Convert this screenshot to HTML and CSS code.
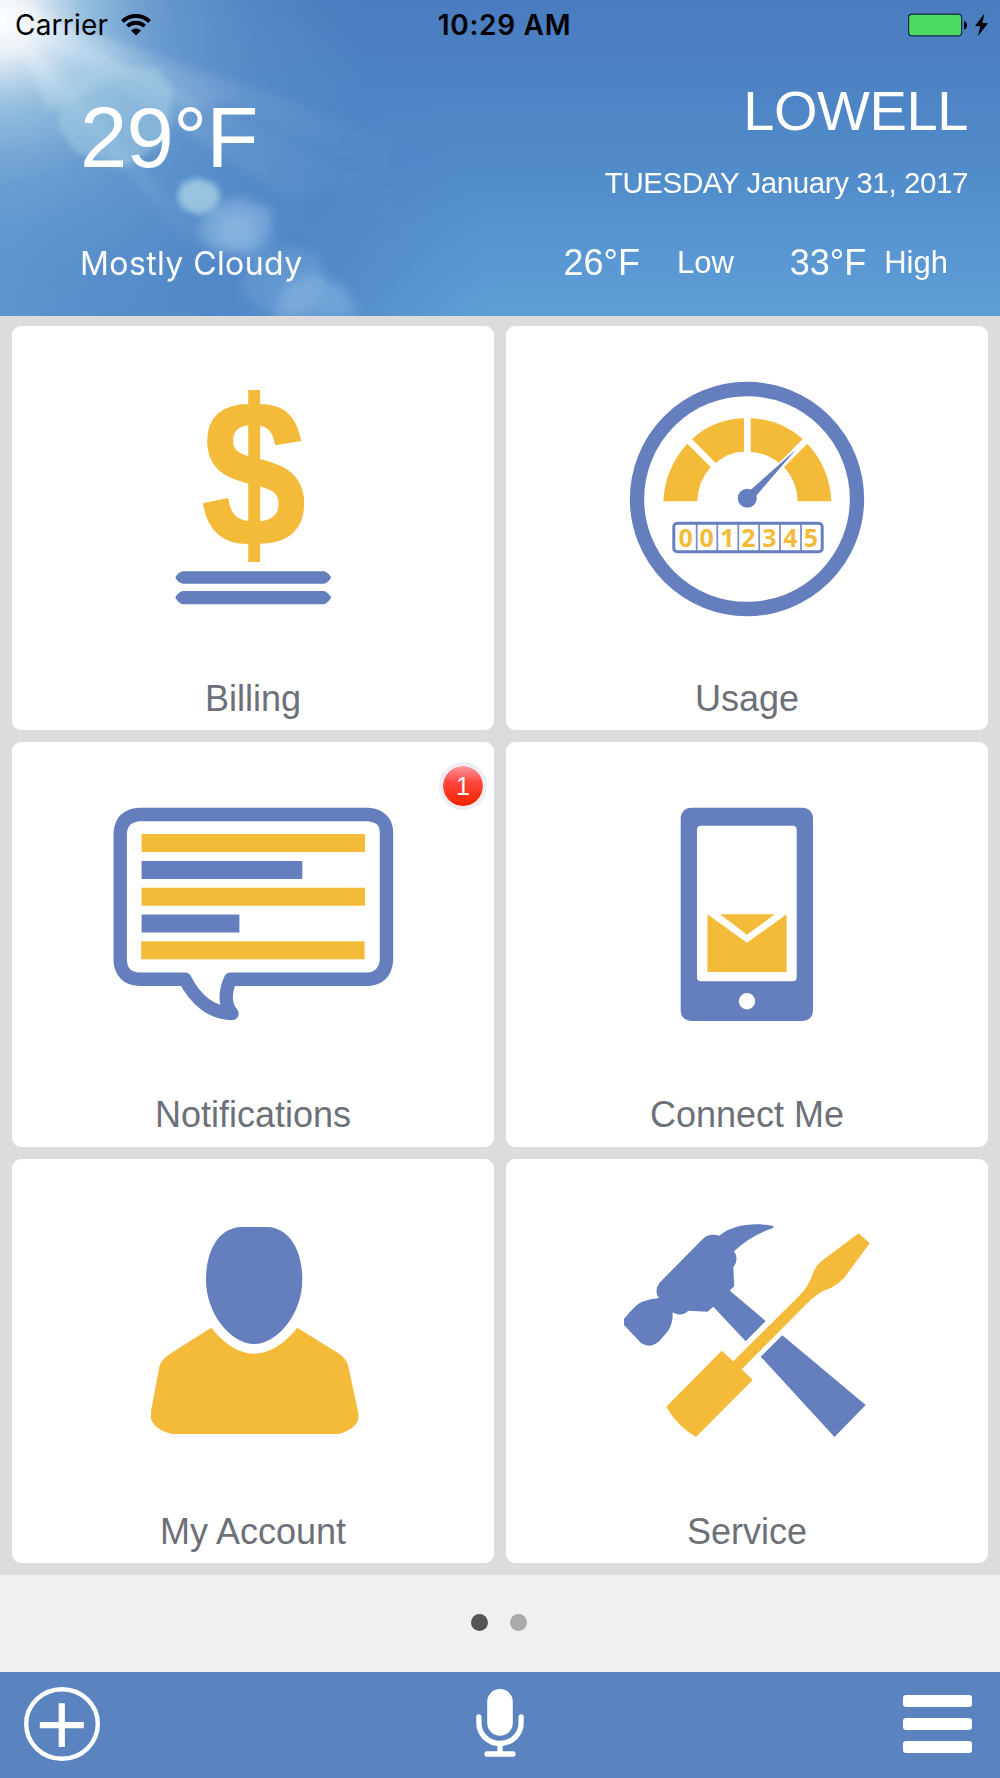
FILE: index.html
```
<!DOCTYPE html>
<html lang="en">
<head>
    <meta charset="UTF-8">
    <title>Home</title>
    <link rel="stylesheet" href="styles.css">
</head>
<body>

    <header>
        <svg class="sky" viewBox="0 0 1000 316" preserveAspectRatio="none">
            <defs>
                <linearGradient id="base" x1="0" y1="0" x2="0" y2="1">
                    <stop offset="0" stop-color="#4a7bbf"/>
                    <stop offset="0.5" stop-color="#508ac9"/>
                    <stop offset="1" stop-color="#5e9fd7"/>
                </linearGradient>
                <radialGradient id="sun" gradientUnits="userSpaceOnUse" cx="0" cy="20" r="370">
                    <stop offset="0" stop-color="#ffffff"/>
                    <stop offset="0.09" stop-color="#f2f6f9" stop-opacity="0.95"/>
                    <stop offset="0.23" stop-color="#a9cfe6" stop-opacity="0.8"/>
                    <stop offset="0.45" stop-color="#7fb1da" stop-opacity="0.5"/>
                    <stop offset="0.7" stop-color="#74a6d5" stop-opacity="0.22"/>
                    <stop offset="1" stop-color="#6a9fd2" stop-opacity="0"/>
                </radialGradient>
                <radialGradient id="shade" gradientUnits="userSpaceOnUse" cx="200" cy="260" r="290">
                    <stop offset="0" stop-color="#4d82c4" stop-opacity="0.85"/>
                    <stop offset="0.5" stop-color="#4d82c4" stop-opacity="0.6"/>
                    <stop offset="1" stop-color="#4d82c4" stop-opacity="0"/>
                </radialGradient>
                <linearGradient id="ray" gradientUnits="userSpaceOnUse" x1="0" y1="0" x2="400" y2="220">
                    <stop offset="0" stop-color="#fff" stop-opacity="0.5"/>
                    <stop offset="0.35" stop-color="#cfe5f2" stop-opacity="0.22"/>
                    <stop offset="0.65" stop-color="#b5d5ec" stop-opacity="0.1"/>
                    <stop offset="1" stop-color="#a5cbe8" stop-opacity="0"/>
                </linearGradient>
                <filter id="soft" x="-20%" y="-20%" width="140%" height="140%"><feGaussianBlur stdDeviation="5"/></filter>
                <filter id="edge" x="-20%" y="-20%" width="140%" height="140%"><feGaussianBlur stdDeviation="3"/></filter>
                <filter id="haze" x="-20%" y="-20%" width="140%" height="140%"><feGaussianBlur stdDeviation="6"/></filter>
            </defs>
            <rect width="1000" height="316" fill="url(#base)"/>
            <rect width="1000" height="316" fill="url(#shade)"/>
            <rect width="1000" height="316" fill="url(#sun)"/>
            <!-- sun rays -->
            <g fill="url(#ray)" filter="url(#soft)">
                <path d="M-10 0 L450 215 L420 240 Z"/>
                <path d="M-10 -5 L230 100 L180 110 Z"/>
                <path d="M0 0 L400 140 L380 175 Z"/>
                <path d="M0 10 L330 190 L290 200 Z"/>
                <path d="M0 20 L220 250 L185 240 Z" opacity="0.6"/>
                <path d="M0 10 L130 70 L50 110 Z"/>
            </g>
            <!-- lens flare -->
            <g fill="#a9d2e6" filter="url(#edge)">
                <path d="M62 85 L95 66 L158 68 L173 90 L168 138 L125 168 L75 152 L58 125 Z" opacity="0.5"/>
                <path d="M182 183 L198 178 L215 184 L221 196 L214 208 L198 215 L183 209 L177 197 Z" opacity="0.8"/>
            </g>
            <g fill="#a3cdea" filter="url(#haze)">
                <path d="M208 205 L240 198 L272 210 L270 240 L250 256 L210 250 L199 230 Z" opacity="0.45"/>
                <circle cx="236" cy="231" r="18" opacity="0.3"/>
                <path d="M252 255 L290 246 L320 256 L325 290 L300 316 L262 310 L240 290 Z" opacity="0.2"/>
                <path d="M285 285 L315 273 L345 288 L358 316 L272 320 Z" opacity="0.35"/>
            </g>
        </svg>

        <div class="status-bar">
            <div class="carrier">
                Carrier
                <svg class="wifi" width="30" height="22" viewBox="0 0 30 22">
                    <path d="M1.5 7.5 A19.5 19.5 0 0 1 28.5 7.5" fill="none" stroke="#000" stroke-width="4"/>
                    <path d="M6.3 12.2 A12.7 12.7 0 0 1 23.7 12.2" fill="none" stroke="#000" stroke-width="3.8"/>
                    <path d="M10 16.5 A7.4 7.4 0 0 1 20 16.5 L15 21.5 Z"/>
                </svg>
            </div>
            <div class="time">10:29 AM</div>
            <svg class="battery" width="80" height="24" viewBox="0 0 80 24">
                <rect x="0.6" y="1.1" width="53" height="21.8" rx="3.5" fill="#4cd964" stroke="#10264a" stroke-width="1.2"/>
                <path d="M56 8 Q59 9 59 12.2 Q59 15.5 56 16.5 Z"/>
                <path d="M76.5 0.5 L67 13 L72.3 13.2 L70 23 L80 10.2 L74.3 10 Z"/>
            </svg>
        </div>

        <div class="weather">
            <div class="now">
                <div class="temp">29°F</div>
                <div class="condition">Mostly Cloudy</div>
            </div>
            <div class="place">
                <div class="city">LOWELL</div>
                <div class="date">TUESDAY January 31, 2017</div>
                <div class="range">
                    <span class="deg">26°F</span>
                    <span class="low">Low</span>
                    <span class="deg">33°F</span>
                    <span class="high">High</span>
                </div>
            </div>
        </div>
    </header>

    <main>
        <a class="card">
            <svg class="icon" viewBox="103 356 300 280">
                <text class="dollar" transform="translate(253.8 546) scale(0.93 1.03)">$</text>
                <path class="blue" d="M175.3 577.5 Q178 572 183 571.3 H324 Q328 572 331.2 577.5 Q328 583 324 583.7 H183 Q178 583 175.3 577.5 Z M175.3 597.5 Q178 592 183 591 H324 Q328 592 331.2 597.5 Q328 603 324 604.3 H183 Q178 603 175.3 597.5 Z"/>
            </svg>
            <span>Billing</span>
        </a>

        <a class="card">
            <svg class="icon" viewBox="597 356 300 280">
                <circle class="blue-line" cx="747" cy="499" r="110" stroke-width="14.3"/>
                <path class="yellow" d="M663.3 501.3 Q665 468 687.3 443.7 L710.7 467 Q698 481 697.3 501.3 Z"/>
                <path class="yellow" d="M692 439 Q714 419 744 418.3 V451.7 Q728 452 715.7 463 Z"/>
                <path class="yellow" d="M750.7 418.3 Q780 419 802.7 439 L779 463 Q767 453 750.7 451.7 Z"/>
                <path class="yellow" d="M807.3 443.7 Q830 468 831.3 501.3 H797.7 Q797 481 784 467 Z"/>
                <path class="blue" d="M749.5 490 L803 442.5 L756 497 Z" stroke="#fff" stroke-width="1.2"/>
                <circle class="blue" cx="747.3" cy="498.3" r="9.5"/>
                <rect class="blue-line" x="673.8" y="523.2" width="148.4" height="28.6" rx="3.5" stroke-width="3"/>
                <path class="blue-line" d="M696.7 523 V552 M717.3 523 V552 M738.3 523 V552 M759.2 523 V552 M780 523 V552 M801 523 V552" stroke-width="1.8" opacity="0.85"/>
                <g class="digits">
                    <text x="685.7" y="546.5">0</text>
                    <text x="706.7" y="546.5">0</text>
                    <text x="727.3" y="546.5">1</text>
                    <text x="748.4" y="546.5">2</text>
                    <text x="769.3" y="546.5">3</text>
                    <text x="790.3" y="546.5">4</text>
                    <text x="811" y="546.5">5</text>
                </g>
            </svg>
            <span>Usage</span>
        </a>

        <a class="card">
            <svg class="icon" viewBox="103 772 300 280">
                <path class="blue-line" stroke-width="13.4" stroke-linejoin="round" d="M139 814.5 H368 Q386.5 816 386.5 833 V961 Q384.5 978 368 979.3 H230.5 C225 991 224 1005 232 1013.5 C211 1013 195 999 185 979.3 H139 Q121.5 978 120.2 961 V833 Q121.5 816 139 814.5 Z"/>
                <rect class="yellow" x="141.6" y="834" width="223.4" height="18"/>
                <rect class="blue" x="141.6" y="861" width="160.7" height="18"/>
                <rect class="yellow" x="141.6" y="887.7" width="223.4" height="18"/>
                <rect class="blue" x="141.6" y="914.5" width="97.8" height="18"/>
                <rect class="yellow" x="141.2" y="941.3" width="223.4" height="18"/>
            </svg>
            <span>Notifications</span>
            <b class="badge">1</b>
        </a>

        <a class="card">
            <svg class="icon" viewBox="597 772 300 280">
                <rect class="blue" x="680.7" y="807.7" width="132.3" height="213.3" rx="10"/>
                <rect x="697" y="825.7" width="99.7" height="155.6" rx="4" fill="#fff"/>
                <path class="yellow" d="M707.4 914.3 L747 942.7 L786.6 914.3 V972 H707.4 Z"/>
                <path class="yellow" d="M720 914.3 H774.8 L747 934.7 Z"/>
                <circle cx="747" cy="1001.3" r="8.2" fill="#fff"/>
            </svg>
            <span>Connect Me</span>
        </a>

        <a class="card">
            <svg class="icon" viewBox="103 1189 300 280">
                <path class="blue" d="M241 1227 H267.5 C288 1228 302.3 1248 302.3 1280 C302.3 1314 277 1344 254.2 1344 C231 1344 206 1314 206 1280 C206 1248 220 1228 241 1227 Z"/>
                <path class="yellow" d="M211.3 1327.7 Q231 1353 254 1353.7 Q277 1353 297.3 1327.7 L338 1353 Q347 1359 348.5 1367 L358.3 1413 V1419 Q355 1430 338 1434 H172 Q155 1430 151 1419 V1411 L159.5 1366 Q161 1360 170 1353.7 Z"/>
            </svg>
            <span>My Account</span>
        </a>

        <a class="card">
            <svg class="icon" viewBox="597 1189 300 280">
                <path class="blue" d="M773.3 1226 C754 1222 732 1225 719.3 1235.7 C714 1234 708 1234 703.5 1238.3 L659.5 1282.7 Q653.5 1291 659 1298 C650 1299 642 1301 637 1305 Q629 1312 624 1319 V1325 L641 1343 Q650 1349 659 1341.5 L668 1331 Q673 1324 672.7 1312.3 Q681 1317.5 688.3 1310.7 L707.5 1311.7 L713.3 1306.7 L745.7 1341.3 L765.7 1321 L729.8 1290.7 L734.2 1286 L733.3 1267.3 Q739.5 1259 734 1251.3 Q751 1235 773.3 1228 Z"/>
                <path class="blue" d="M782.3 1335.3 L865.7 1405 L834.5 1437 L760.7 1356.7 Z"/>
                <path class="yellow" d="M858.7 1233.3 L869.7 1243.3 L845 1276.7 Q839 1284 828 1289.3 C821 1291 814 1297 807.5 1303 L741.7 1369.3 L752.7 1380 L696 1437 Q677 1426 666.3 1406.7 L721.7 1350.7 L733.3 1361.3 L800 1295 Q809 1286 813 1273 Q816 1265 823 1260 Z"/>
            </svg>
            <span>Service</span>
        </a>
    </main>

    <div class="pager">
        <i class="dot active"></i>
        <i class="dot"></i>
    </div>

    <footer>
        <svg width="76" height="76" viewBox="0 0 76 76">
            <ellipse cx="38" cy="38" rx="35.8" ry="34.8" fill="none" stroke="#fff" stroke-width="4.4"/>
            <path d="M15.8 39.2 H59.8 M37.8 17.3 V61" stroke="#fff" stroke-width="6.2"/>
        </svg>
        <svg class="mic" width="48" height="70" viewBox="0 0 48 70">
            <rect x="11.2" y="1" width="25.6" height="46.7" rx="12.8" fill="#fff"/>
            <path d="M2.9 29 V35 A21.1 20.5 0 0 0 45.1 35 V29 M24 56 V66 M11 66 H37" fill="none" stroke="#fff" stroke-width="5.3" stroke-linecap="round"/>
        </svg>
        <div class="menu">
            <i></i>
            <i></i>
            <i></i>
        </div>
    </footer>

</body>
</html>
```
FILE: styles.css
```
* {
    box-sizing: border-box;
}

body {
    margin: 0;
    width: 1000px;
    height: 1778px;
    display: flex;
    flex-direction: column;
    font-family: "Liberation Sans", Arial, sans-serif;
    background: #f0f0f0;
}

header {
    position: relative;
    height: 316px;
    color: white;
    background: #5088c8;
}

.sky {
    position: absolute;
    top: 0;
    left: 0;
    width: 100%;
    height: 100%;
}

.status-bar {
    position: relative;
    display: grid;
    grid-template-columns: 1fr auto 1fr;
    height: 50px;
    padding: 0 12px 0 15px;
    line-height: 50px;
    font-family: Inter, sans-serif;
    font-size: 28px;
    color: black;
}

.carrier {
    display: flex;
    align-items: center;
    gap: 13px;
    letter-spacing: 0.2px;
}

.time {
    padding-left: 6px;
    font-weight: 600;
    letter-spacing: 0.7px;
}

.battery {
    justify-self: end;
    align-self: center;
}

.weather {
    position: relative;
    display: flex;
    justify-content: space-between;
    padding: 0 32px 0 80px;
}

.now {
    display: flex;
    flex-direction: column;
    gap: 58px;
    padding-top: 40px;
}

.temp {
    font-size: 85px;
    line-height: 96px;
    letter-spacing: -0.7px;
}

.condition {
    font-family: Inter, sans-serif;
    font-size: 32px;
    line-height: 40px;
    letter-spacing: 0.4px;
}

.place {
    padding-top: 31px;
    text-align: right;
}

.city {
    font-size: 56px;
    line-height: 60px;
    letter-spacing: -0.4px;
}

.date {
    margin-top: 22px;
    font-size: 29.5px;
    line-height: 40px;
    letter-spacing: -0.4px;
}

.range {
    display: flex;
    align-items: center;
    justify-content: flex-end;
    margin-top: 40px;
    padding-right: 20px;
    line-height: 40px;
    font-size: 31px;
}

.deg {
    font-size: 36px;
}

.low {
    margin: 0 56px 0 37px;
}

.high {
    margin-left: 18px;
}

main {
    display: grid;
    grid-template-columns: 1fr 1fr;
    grid-template-rows: repeat(3, 1fr);
    gap: 12px;
    height: 1259px;
    padding: 10px 12px 12px;
    background: #dcdcdc;
}

.card {
    position: relative;
    display: flex;
    flex-direction: column;
    align-items: center;
    padding-top: 30px;
    background: white;
    border-radius: 9px;
    color: #6d7078;
    font-size: 36px;
}

.icon {
    width: 300px;
    height: 280px;
    overflow: visible;
}

.card span {
    margin-top: 43px;
    line-height: 40px;
}

.blue {
    fill: #657ebd;
}

.blue-line {
    fill: none;
    stroke: #657ebd;
}

.yellow {
    fill: #f4bb3b;
}

.dollar {
    fill: #f4bb3b;
    stroke: #f4bb3b;
    stroke-width: 2px;
    font-size: 202px;
    font-weight: bold;
    text-anchor: middle;
}

.digits {
    fill: #f4bb3b;
    font-family: "Open Sans", sans-serif;
    font-size: 25px;
    font-weight: bold;
    text-anchor: middle;
}

.badge {
    position: absolute;
    top: 20px;
    right: 7px;
    width: 48px;
    height: 48px;
    border: 4px solid #eeeef3;
    border-radius: 50%;
    background: linear-gradient(#ff9a9f, #ff4640 40%, #fb2500 95%) padding-box;
    color: white;
    font-size: 25px;
    font-weight: normal;
    line-height: 41px;
    text-align: center;
}

.pager {
    display: flex;
    justify-content: center;
    align-items: center;
    gap: 22px;
    height: 96.5px;
    padding: 0 3px 1px 0;
}

.dot {
    width: 17px;
    height: 17px;
    border-radius: 50%;
    background: #aaa;
}

.dot.active {
    background: #555;
}

footer {
    display: flex;
    justify-content: space-between;
    align-items: center;
    height: 106.5px;
    padding: 0 28px 2px 24px;
    background: #5b83bf;
}

.mic {
    margin: 0 4px 2px 0;
}

.menu {
    display: flex;
    flex-direction: column;
    gap: 11px;
    width: 69px;
}

.menu i {
    height: 12px;
    border-radius: 3px;
    background: white;
}
```
